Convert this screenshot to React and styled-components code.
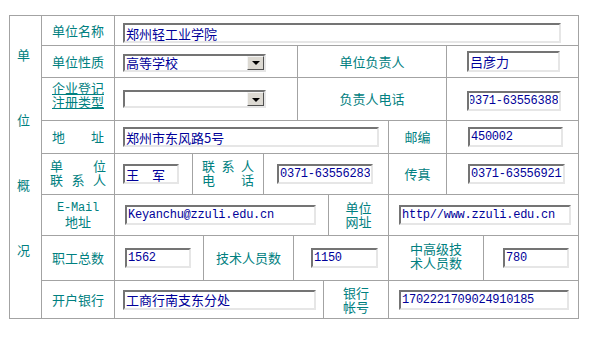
import React from 'react';
import styled, { createGlobalStyle } from 'styled-components';

const GlobalStyle = createGlobalStyle`
    html, body {
        margin: 0;
        padding: 0;
        background: #fff;
    }
    body {
        font-family: "Noto Sans CJK SC", sans-serif;
        font-size: 13px;
    }
`;

const LINE = '#a3a3a3';
const TEAL = '#008080';
const INK = '#000099';

const Page = styled.div`
    padding: 15px 0 0 9px;
`;

const Frame = styled.div`
    display: flex;
    width: 570px;
    box-sizing: border-box;
    border: 1px solid ${LINE};
`;

const Side = styled.div`
    width: 32px;
    flex-shrink: 0;
    box-sizing: border-box;
    border-right: 1px solid ${LINE};
    display: flex;
    flex-direction: column;
    align-items: center;
    gap: 52px;
    padding: 32px 4px 0 0;
    color: ${TEAL};
    line-height: 13px;
`;

const Rows = styled.div`
    flex: 1;
    display: flex;
    flex-direction: column;
`;

const Row = styled.div`
    display: flex;
    height: ${p => p.$h}px;
    box-sizing: border-box;
    border-bottom: 1px solid ${LINE};

    &:last-child {
        border-bottom: none;
    }
`;

const Cell = styled.div`
    display: flex;
    align-items: center;
    box-sizing: border-box;
    width: ${p => p.$w}px;
    flex-shrink: 0;
    padding-left: ${p => p.$pl || 0}px;
    border-right: 1px solid ${LINE};

    &:last-child {
        flex: 1;
        border-right: none;
    }
`;

const Label = styled(Cell)`
    justify-content: center;
    padding: 0;
    color: ${TEAL};
    line-height: 14px;
    text-align: center;
    text-decoration: ${p => (p.$link ? 'underline' : 'none')};
`;

const Lines = styled.div`
    display: flex;
    flex-direction: column;
    line-height: 14px;
    margin-top: ${p => p.$dy || 0}px;
`;

const Spread = styled.div`
    display: flex;
    justify-content: space-between;
    width: ${p => p.$w}px;
`;

const Mono = styled.span`
    font-family: "Liberation Mono", monospace;
    font-size: 12px;
    letter-spacing: -0.2px;
`;

const Field = styled.input`
    box-sizing: border-box;
    width: ${p => p.$w}px;
    height: ${p => p.$h || 20}px;
    margin: ${p => p.$dy || 0}px 0 0 0;
    padding: 0 1px;
    border: 2px solid;
    border-color: #747474 #e6e6e6 #e6e6e6 #747474;
    background: #fff;
    color: ${INK};
    outline: none;
    font-family: ${p => (p.$mono ? '"Liberation Mono", monospace' : '"Noto Sans CJK SC", sans-serif')};
    font-size: ${p => (p.$mono ? '12px' : '13px')};
    letter-spacing: ${p => (p.$mono ? '-0.25px' : '0')};
`;

const SelectBox = styled.div`
    display: flex;
    align-items: center;
    justify-content: space-between;
    box-sizing: border-box;
    width: ${p => p.$w}px;
    height: 18px;
    margin-top: ${p => p.$dy || 0}px;
    border: 2px solid;
    border-color: #747474 #e6e6e6 #e6e6e6 #747474;
    background: #fff;
    color: ${INK};
    font-size: 13px;
    padding-left: 1px;
`;

const DropButton = styled.span`
    display: flex;
    align-items: center;
    justify-content: center;
    box-sizing: border-box;
    width: 17px;
    height: 14px;
    background: #dcd9d2;
    border: 1px solid;
    border-color: #f4f4f4 #505050 #505050 #f4f4f4;
`;

const Caret = styled.span`
    width: 0;
    height: 0;
    border-left: 4px solid transparent;
    border-right: 4px solid transparent;
    border-top: 4px solid #000;
    margin-top: 1px;
`;

function Select ({ value, w, dy }) {
    return (
        <SelectBox $w={ w } $dy={ dy }>
            <span>{ value }</span>
            <DropButton><Caret/></DropButton>
        </SelectBox>
    );
}

const scrollToEnd = el => {
    if (el) {
        el.scrollLeft = el.scrollWidth;
    }
};

export default function App () {
    return (
        <Page>
            <GlobalStyle/>
            <Frame>
                <Side>
                    <span>单</span>
                    <span>位</span>
                    <span>概</span>
                    <span>况</span>
                </Side>
                <Rows>
                    <Row $h={ 30 }>
                        <Label $w={ 73 }>单位名称</Label>
                        <Cell $pl={ 8 }>
                            <Field $w={ 438 } $dy={ 5 } readOnly defaultValue="郑州轻工业学院"/>
                        </Cell>
                    </Row>
                    <Row $h={ 32 }>
                        <Label $w={ 73 }>单位性质</Label>
                        <Cell $w={ 183 } $pl={ 8 }>
                            <Select w={ 143 } value="高等学校" dy={ 2 }/>
                        </Cell>
                        <Label $w={ 149 }>单位负责人</Label>
                        <Cell $pl={ 20 }>
                            <Field $w={ 93 } $h={ 21 } readOnly defaultValue="吕彦力"/>
                        </Cell>
                    </Row>
                    <Row $h={ 43 }>
                        <Label $w={ 73 } $link>
                            <Lines $dy={ -8 }>
                                <span>企业登记</span>
                                <span>注册类型</span>
                            </Lines>
                        </Label>
                        <Cell $w={ 183 } $pl={ 8 }>
                            <Select w={ 143 } value=""/>
                        </Cell>
                        <Label $w={ 149 }>负责人电话</Label>
                        <Cell $pl={ 20 }>
                            <Field $w={ 94 } $dy={ 3 } $mono readOnly ref={ scrollToEnd } defaultValue="0371-63556388"/>
                        </Cell>
                    </Row>
                    <Row $h={ 33 }>
                        <Label $w={ 73 }>地　　址</Label>
                        <Cell $w={ 274 } $pl={ 8 }>
                            <Field $w={ 256 } readOnly defaultValue="郑州市东风路5号"/>
                        </Cell>
                        <Label $w={ 58 }>邮编</Label>
                        <Cell $pl={ 21 }>
                            <Field $w={ 95 } $mono readOnly defaultValue="450002"/>
                        </Cell>
                    </Row>
                    <Row $h={ 41 }>
                        <Label $w={ 73 }>
                            <Lines $dy={ -3 }>
                                <Spread $w={ 56 }><span>单</span><span>位</span></Spread>
                                <Spread $w={ 56 }><span>联</span><span>系</span><span>人</span></Spread>
                            </Lines>
                        </Label>
                        <Cell $w={ 78 } $pl={ 8 }>
                            <Field $w={ 56 } readOnly defaultValue="王　军"/>
                        </Cell>
                        <Label $w={ 71 }>
                            <Lines $dy={ -3 }>
                                <Spread $w={ 52 }><span>联</span><span>系</span><span>人</span></Spread>
                                <Spread $w={ 52 }><span>电</span><span>话</span></Spread>
                            </Lines>
                        </Label>
                        <Cell $w={ 125 } $pl={ 13 }>
                            <Field $w={ 96 } $mono readOnly defaultValue="0371-63556283"/>
                        </Cell>
                        <Label $w={ 58 }>传真</Label>
                        <Cell $pl={ 21 }>
                            <Field $w={ 97 } $mono readOnly defaultValue="0371-63556921"/>
                        </Cell>
                    </Row>
                    <Row $h={ 41 }>
                        <Label $w={ 73 }>
                            <Lines>
                                <Mono>E-Mail</Mono>
                                <span>地址</span>
                            </Lines>
                        </Label>
                        <Cell $w={ 214 } $pl={ 10 }>
                            <Field $w={ 191 } $mono readOnly defaultValue="Keyanchu@zzuli.edu.cn"/>
                        </Cell>
                        <Label $w={ 60 }>
                            <Lines>
                                <span>单位</span>
                                <span>网址</span>
                            </Lines>
                        </Label>
                        <Cell $pl={ 10 }>
                            <Field $w={ 172 } $mono readOnly defaultValue="http//www.zzuli.edu.cn"/>
                        </Cell>
                    </Row>
                    <Row $h={ 45 }>
                        <Label $w={ 73 }>职工总数</Label>
                        <Cell $w={ 89 } $pl={ 10 }>
                            <Field $w={ 66 } $mono readOnly defaultValue="1562"/>
                        </Cell>
                        <Label $w={ 90 }>技术人员数</Label>
                        <Cell $w={ 95 } $pl={ 17 }>
                            <Field $w={ 67 } $mono readOnly defaultValue="1150"/>
                        </Cell>
                        <Label $w={ 95 }>
                            <Lines $dy={ -4 }>
                                <span>中高级技</span>
                                <span>术人员数</span>
                            </Lines>
                        </Label>
                        <Cell $pl={ 19 }>
                            <Field $w={ 66 } $mono readOnly defaultValue="780"/>
                        </Cell>
                    </Row>
                    <Row $h={ 37 }>
                        <Label $w={ 73 }>开户银行</Label>
                        <Cell $w={ 209 } $pl={ 8 }>
                            <Field $w={ 193 } readOnly defaultValue="工商行南支东分处"/>
                        </Cell>
                        <Label $w={ 65 }>
                            <Lines>
                                <span>银行</span>
                                <span>帐号</span>
                            </Lines>
                        </Label>
                        <Cell $pl={ 10 }>
                            <Field $w={ 170 } $mono readOnly defaultValue="1702221709024910185"/>
                        </Cell>
                    </Row>
                </Rows>
            </Frame>
        </Page>
    );
}
